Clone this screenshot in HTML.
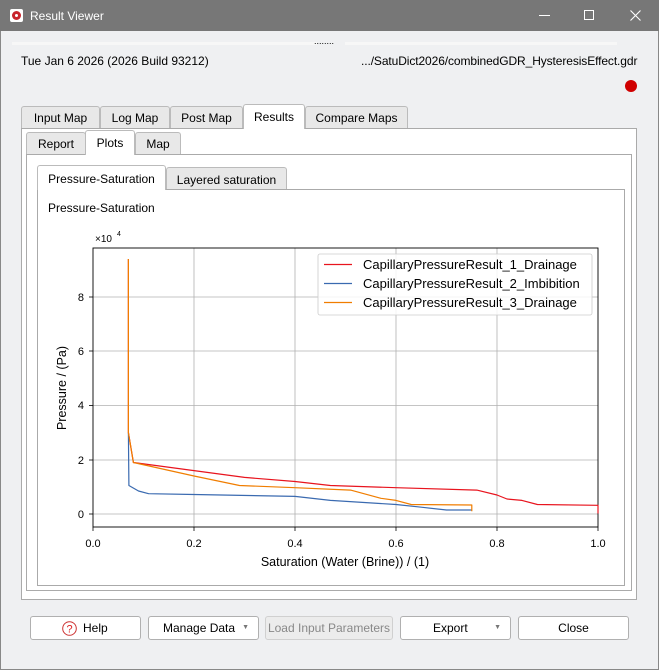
<!DOCTYPE html>
<html><head><meta charset="utf-8"><style>
*{box-sizing:border-box;margin:0;padding:0}
body{width:659px;height:670px;background:#eff0f2;font-family:"Liberation Sans",sans-serif;font-size:12px;color:#000;position:relative;overflow:hidden}
.a{position:absolute}
.tb{left:0;top:0;width:659px;height:31px;background:#777;color:#fff;font-size:12px}
.tab{position:absolute;border:1px solid #bbb;border-bottom:none;background:#e8e8e8;text-align:center;border-radius:3px 3px 0 0}
.tab.s{background:#fff}
.pnl{position:absolute;border:1px solid #aaa;background:#fff}
.btn{position:absolute;top:616px;height:24px;border:1px solid #b0b0b0;border-radius:3px;background:#fff;text-align:center;line-height:22px;font-size:12px}
</style></head><body>
<div class="a tb">
 <div class="a" style="left:10px;top:9px;width:13px;height:13px;background:#fff;border-radius:2px"><div class="a" style="left:2px;top:2px;width:9px;height:9px;background:#c8242c;border-radius:50%"></div><div class="a" style="left:5px;top:5px;width:3px;height:3px;background:#fff;border-radius:50%"></div></div>
 <div class="a" style="left:30px;top:9px">Result Viewer</div>
 <div class="a" style="left:539px;top:15px;width:11px;height:1px;background:#fff"></div>
 <div class="a" style="left:584px;top:10px;width:10px;height:10px;border:1px solid #fff"></div>
 <svg class="a" style="left:630px;top:10px" width="11" height="11"><path d="M0.5 0.5L10.5 10.5M10.5 0.5L0.5 10.5" stroke="#fff" stroke-width="1.1"/></svg>
</div>
<div class="a" style="left:12px;top:42px;width:305px;height:3px;background:#f7f7f7"></div>
<div class="a" style="left:314px;top:36px;font-size:9px">........</div>
<div class="a" style="left:345px;top:42px;width:272px;height:3px;background:#f7f7f7"></div>
<div class="a" style="left:21px;top:54px">Tue Jan 6 2026 (2026 Build 93212)</div>
<div class="a" style="left:361px;top:54px;letter-spacing:-0.1px">.../SatuDict2026/combinedGDR_HysteresisEffect.gdr</div>
<div class="a" style="left:625px;top:80px;width:12px;height:12px;border-radius:50%;background:#d00000"></div>

<div class="pnl" style="left:21px;top:128px;width:616px;height:472px"></div>
<div class="tab" style="left:21px;top:106px;width:79px;height:22px;line-height:22px">Input Map</div>
<div class="tab" style="left:100px;top:106px;width:70px;height:22px;line-height:22px">Log Map</div>
<div class="tab" style="left:170px;top:106px;width:73px;height:22px;line-height:22px">Post Map</div>
<div class="tab s" style="left:243px;top:104px;width:62px;height:25px;line-height:24px">Results</div>
<div class="tab" style="left:305px;top:106px;width:103px;height:22px;line-height:22px">Compare Maps</div>

<div class="pnl" style="left:26px;top:154px;width:606px;height:437px"></div>
<div class="tab" style="left:26px;top:132px;width:60px;height:22px;line-height:22px">Report</div>
<div class="tab s" style="left:85px;top:130px;width:50px;height:25px;line-height:24px">Plots</div>
<div class="tab" style="left:135px;top:132px;width:46px;height:22px;line-height:22px">Map</div>

<div class="pnl" style="left:37px;top:189px;width:588px;height:397px"></div>
<div class="tab s" style="left:37px;top:165px;width:129px;height:25px;line-height:26px">Pressure-Saturation</div>
<div class="tab" style="left:166px;top:167px;width:121px;height:22px;line-height:24px">Layered saturation</div>
<div class="a" style="left:48px;top:201px">Pressure-Saturation</div>

<svg class="a" style="left:0;top:0" width="659" height="670" font-family="Liberation Sans, sans-serif" font-size="11">
 <g stroke="#b0b0b0" stroke-width="0.8">
  <line x1="194" y1="248" x2="194" y2="527"/><line x1="295" y1="248" x2="295" y2="527"/><line x1="396" y1="248" x2="396" y2="527"/><line x1="497" y1="248" x2="497" y2="527"/>
  <line x1="93" y1="514" x2="598" y2="514"/><line x1="93" y1="460" x2="598" y2="460"/><line x1="93" y1="405.5" x2="598" y2="405.5"/><line x1="93" y1="351" x2="598" y2="351"/><line x1="93" y1="297" x2="598" y2="297"/>
 </g>
 <rect x="93" y="248" width="505" height="279" fill="none" stroke="#000" stroke-width="0.9"/>
 <g stroke="#000" stroke-width="0.8">
  <line x1="93" y1="527" x2="93" y2="531"/><line x1="194" y1="527" x2="194" y2="531"/><line x1="295" y1="527" x2="295" y2="531"/><line x1="396" y1="527" x2="396" y2="531"/><line x1="497" y1="527" x2="497" y2="531"/><line x1="598" y1="527" x2="598" y2="531"/>
  <line x1="89" y1="514" x2="93" y2="514"/><line x1="89" y1="460" x2="93" y2="460"/><line x1="89" y1="405.5" x2="93" y2="405.5"/><line x1="89" y1="351" x2="93" y2="351"/><line x1="89" y1="297" x2="93" y2="297"/>
 </g>
 <g text-anchor="middle" fill="#000">
  <text x="93" y="547">0.0</text><text x="194" y="547">0.2</text><text x="295" y="547">0.4</text><text x="396" y="547">0.6</text><text x="497" y="547">0.8</text><text x="598" y="547">1.0</text>
  <text x="345" y="566" font-size="12.5">Saturation (Water (Brine)) / (1)</text>
 </g>
 <g text-anchor="end"><text x="84" y="518">0</text><text x="84" y="464">2</text><text x="84" y="409">4</text><text x="84" y="355">6</text><text x="84" y="301">8</text></g>
 <text x="95" y="242" font-size="10">×10</text><text x="117" y="236" font-size="7">4</text>
 <text transform="translate(66,388) rotate(-90)" text-anchor="middle" font-size="12.5">Pressure / (Pa)</text>
 <g fill="none" stroke-width="1.2" stroke-linejoin="round">
  <polyline stroke="#e8141e" points="128.4,259 128.4,432.6 133.4,462.5 194,470.6 244.5,477.4 295,481.5 330.4,485.5 396,487.7 476.8,490.1 497,495 507,499 522,500.4 537.4,504.5 598,505.3 598,513.5"/>
  <polyline stroke="#3a6ab0" points="128.4,432.6 128.9,485.5 138.5,491 148.6,493.7 194,494.5 295,496.4 330.4,500.4 396,504.5 421.3,507.2 446.5,510 471.8,510"/>
  <polyline stroke="#f07d00" points="128.4,259 128.4,432.6 133.4,462.5 194,476 239.5,485.5 295,487.7 350.6,490.1 380.9,498.3 396,500.4 411.2,504.5 471.8,505 471.8,511.3"/>
 </g>
 <rect x="318" y="254" width="274" height="61" rx="2" fill="#fff" fill-opacity="0.85" stroke="#ccc" stroke-width="0.8"/>
 <line x1="324" y1="264.5" x2="352" y2="264.5" stroke="#e8141e" stroke-width="1.3"/>
 <line x1="324" y1="283.5" x2="352" y2="283.5" stroke="#3a6ab0" stroke-width="1.3"/>
 <line x1="324" y1="302.5" x2="352" y2="302.5" stroke="#f07d00" stroke-width="1.3"/>
 <g font-size="13"><text x="363" y="269">CapillaryPressureResult_1_Drainage</text><text x="363" y="288">CapillaryPressureResult_2_Imbibition</text><text x="363" y="307">CapillaryPressureResult_3_Drainage</text></g>
</svg>

<div class="btn" style="left:30px;width:111px">
 <svg class="a" style="left:31px;top:4px" width="15" height="15"><circle cx="7.5" cy="7.5" r="6.8" fill="#fff" stroke="#c33" stroke-width="1"/><text x="7.5" y="11.5" text-anchor="middle" font-family="Liberation Sans, sans-serif" font-size="11" fill="#d22">?</text></svg>
 <span class="a" style="left:52px;top:0">Help</span></div>
<div class="btn" style="left:148px;width:111px;text-align:left;padding-left:14px">Manage Data<span style="position:absolute;right:9px;top:0;font-size:7px;color:#777">▼</span></div>
<div class="btn" style="left:265px;width:128px;background:#ececec;color:#888;border-color:#d0d0d0">Load Input Parameters</div>
<div class="btn" style="left:400px;width:111px;text-align:left;padding-left:32px">Export<span style="position:absolute;right:9px;top:0;font-size:7px;color:#777">▼</span></div>
<div class="btn" style="left:518px;width:111px">Close</div>
<div class="a" style="left:0;top:31px;width:1px;height:639px;background:#888"></div>
<div class="a" style="left:658px;top:31px;width:1px;height:639px;background:#888"></div>
<div class="a" style="left:0;top:669px;width:659px;height:1px;background:#888"></div>
</body></html>
